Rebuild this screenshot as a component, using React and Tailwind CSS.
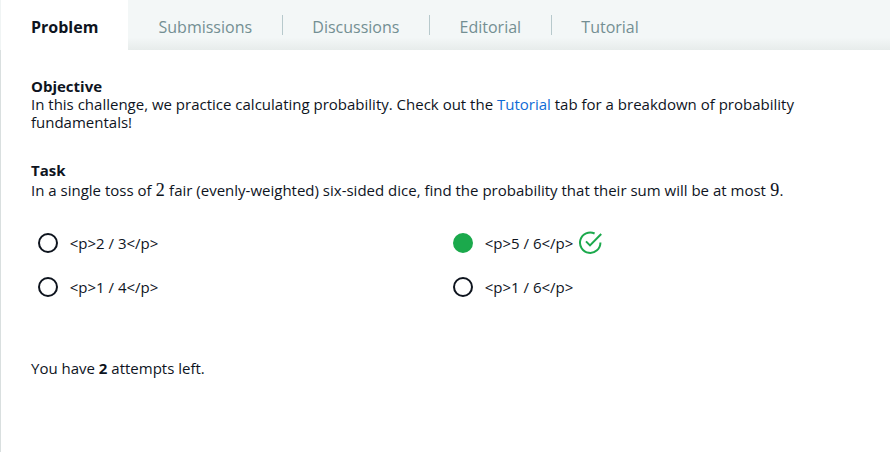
import { clsx } from "clsx";

const tabs = ["Submissions", "Discussions", "Editorial", "Tutorial"];

const options = [
  { label: "<p>2 / 3</p>" },
  { label: "<p>5 / 6</p>", correct: true },
  { label: "<p>1 / 4</p>" },
  { label: "<p>1 / 6</p>" },
];

function CheckCircle() {
  return (
    <svg className="ml-[5px] h-6 w-6" viewBox="0 0 24 24" fill="none" stroke="#1ba94c" strokeWidth="2">
      <path d="M16.6 2.5A10.2 10.2 0 1 0 22.4 11.5" />
      <path d="M8 10.4l4 4L23.2 3" />
    </svg>
  );
}

function Option({ label, correct }) {
  return (
    <div className="flex h-11 items-center">
      <span
        className={clsx(
          "mr-[11.7px] h-5 w-5 rounded-full border-2",
          correct ? "border-[#1ba94c] bg-[#1ba94c]" : "border-[#0e141e]"
        )}
      />
      <span>{label}</span>
      {correct && <CheckCircle />}
    </div>
  );
}

function MathNumber({ children }) {
  return (
    <span className="px-[0.4px] font-['Liberation_Serif',serif] text-[18px] leading-none [-webkit-text-stroke:0.1px_#0e141e]">{children}</span>
  );
}

export default function App() {
  return (
    <div className="flex h-[452px] w-[890px] flex-col overflow-hidden bg-white font-['Open_Sans',sans-serif] text-[15px] leading-[18px] text-[#0e141e]">
      <nav className="flex h-[50px] shrink-0 bg-[#f3f7f7] text-base leading-6">
        <div className="flex w-32 border-l border-[#f0f4f4] bg-white pt-[15px] pl-[30px] font-bold">Problem</div>
        <div className="flex flex-1 bg-linear-to-b from-transparent from-75% to-[#e7eceb] pt-[15px] text-[#738f93]">
          {tabs.map((tab, i) => (
            <div key={tab} className="flex">
              {i > 0 && <span className="h-5 w-px bg-[#b7c9cc]" />}
              <span className={clsx(i > 0 ? "pl-[29.4px]" : "pl-[30.5px]", "pr-[29.8px]")}>{tab}</span>
            </div>
          ))}
        </div>
      </nav>
      <main className="flex-1 border-l border-[#d9dfdf] pt-[27px] pl-[30px]">
        <section className="w-[800px]">
          <h2 className="font-bold">Objective</h2>
          <p>
            In this challenge, we practice calculating probability. Check out the{" "}
            <a className="text-[#0f6bd6]">Tutorial</a> tab for a breakdown of probability fundamentals!
          </p>
        </section>
        <section className="mt-[30px]">
          <h2 className="font-bold">Task</h2>
          <p className="mt-0.5 h-[19px] whitespace-nowrap">
            In a single toss of <MathNumber>2</MathNumber> fair (evenly-weighted) six-sided dice, find the probability
            that their sum will be at most <MathNumber>9</MathNumber>.
          </p>
        </section>
        <div className="mt-[21px] ml-[7px] grid w-[830px] grid-cols-2">
          {options.map((option) => (
            <Option key={option.label} {...option} />
          ))}
        </div>
        <p className="mt-[50px]">
          You have <strong>2</strong> attempts left.
        </p>
      </main>
    </div>
  );
}
